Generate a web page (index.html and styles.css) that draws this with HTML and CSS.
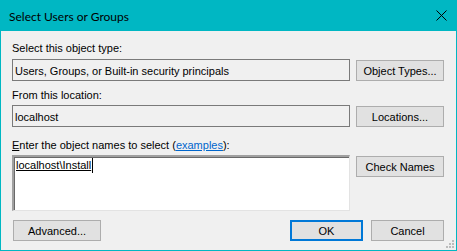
FILE: index.html
```html
<!DOCTYPE html>
<html>
<head>
<meta charset="utf-8">
<link rel="stylesheet" href="styles.css">
</head>
<body>
<div class="dialog">
  <div class="titlebar">
    <span class="title">Select Users or Groups</span>
    <span class="close"><svg width="11" height="11" viewBox="0 0 11 11"><path d="M0.5 0.5 L10.5 10.5 M10.5 0.5 L0.5 10.5" stroke="#000" stroke-width="1" fill="none"/></svg></span>
  </div>
  <div class="content">
    <div class="label l1">Select this object type:</div>
    <div class="row">
      <div class="field">Users, Groups, or Built-in security principals</div>
      <div class="btn">Object Types...</div>
    </div>
    <div class="label l2">From this location:</div>
    <div class="row">
      <div class="field">localhost</div>
      <div class="btn">Locations...</div>
    </div>
    <div class="label l3"><u>E</u>nter the object names to select (<a class="link">examples</a>):</div>
    <div class="row top">
      <div class="names"><span class="name">localhost\Install</span><span class="caret"></span></div>
      <div class="btn check">Check Names</div>
    </div>
    <div class="footer">
      <div class="btn adv">Advanced...</div>
      <div class="spacer"></div>
      <div class="btn small ok">OK</div>
      <div class="btn small">Cancel</div>
    </div>
  </div>
  <svg class="grip" width="9" height="9" viewBox="0 0 9 9">
    <rect x="6" y="0" width="2" height="2" fill="#bcbcbc"/>
    <rect x="3" y="3" width="2" height="2" fill="#bcbcbc"/>
    <rect x="6" y="3" width="2" height="2" fill="#bcbcbc"/>
    <rect x="0" y="6" width="2" height="2" fill="#bcbcbc"/>
    <rect x="3" y="6" width="2" height="2" fill="#bcbcbc"/>
    <rect x="6" y="6" width="2" height="2" fill="#bcbcbc"/>
  </svg>
</div>
</body>
</html>
```

FILE: styles.css
```css
html, body {
  margin: 0;
  padding: 0;
  background: #f0f0f0;
}
.dialog {
  position: relative;
  width: 457px;
  height: 251px;
  box-sizing: border-box;
  border: 1px solid #00b7c3;
  border-top: 0;
  background: #f0f0f0;
  font-family: "Liberation Sans", Arial, sans-serif;
  font-size: 11px;
  color: #000;
}
.titlebar {
  height: 31px;
  margin: 0 -1px;
  background: #00b7c3;
  display: flex;
  align-items: center;
  padding-left: 9px;
  padding-right: 10px;
}
.title {
  font-family: Lato, "Liberation Sans", sans-serif;
  font-size: 12px;
  flex: 1;
  padding-top: 1px;
  color: #000;
}
.close {
  display: flex;
  width: 11px;
  height: 11px;
}
.content {
  padding: 0 12px 0 11px;
}
.label {
  line-height: 13px;
  height: 13px;
}
.l1 { margin-top: 11px; margin-bottom: 4px; }
.l2 { margin-top: 8px; margin-bottom: 3px; }
.l3 { margin-top: 12px; margin-bottom: 3px; }
.link {
  color: #0066cc;
  text-decoration: underline;
}
.row {
  display: flex;
  align-items: center;
  gap: 6px;
}
.row.top {
  align-items: flex-start;
}
.field {
  width: 338px;
  height: 22px;
  box-sizing: border-box;
  border: 1px solid #7a7a7a;
  background: #f0f0f0;
  padding-left: 2px;
  display: flex;
  align-items: center;
  padding-top: 1px;
}
.btn {
  width: 88px;
  height: 21px;
  box-sizing: border-box;
  border: 1px solid #adadad;
  background: #e1e1e1;
  display: flex;
  align-items: center;
  justify-content: center;
  padding-top: 1px;
}
.check {
  margin-top: 1px;
}
.names {
  width: 338px;
  height: 56px;
  box-sizing: border-box;
  background: #fff;
  border-top: 2px solid #a0a0a0;
  border-left: 2px solid #a0a0a0;
  border-right: 1px solid #e3e3e3;
  border-bottom: 1px solid #e3e3e3;
  box-shadow: inset 1px 1px 0 #696969;
  padding: 2px 0 0 2px;
  display: flex;
  align-items: flex-start;
  line-height: 13px;
}
.name {
  text-decoration: underline;
}
.caret {
  display: inline-block;
  width: 1px;
  height: 15px;
  margin-left: 1px;
  margin-top: -1px;
  background: #000;
}
.footer {
  display: flex;
  gap: 8px;
  margin-top: 9px;
  padding-left: 1px;
}
.spacer {
  flex: 1;
}
.small {
  width: 73px;
}
.ok {
  border: 2px solid #0078d7;
}
.grip {
  position: absolute;
  right: 1px;
  bottom: 1px;
}
```
